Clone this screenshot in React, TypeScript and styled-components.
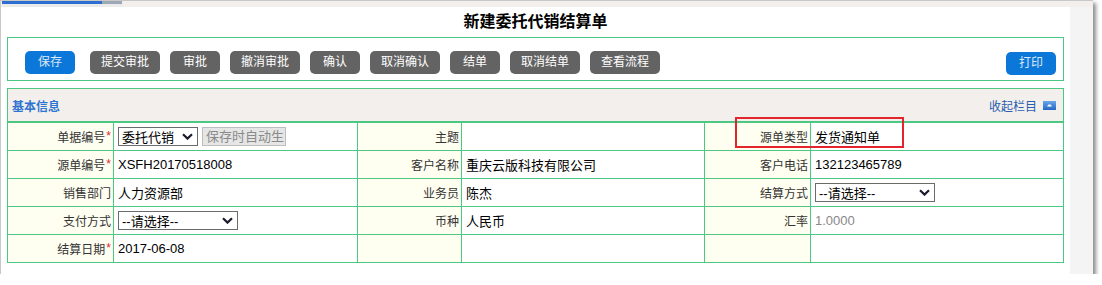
import React from 'react';
import styled, { createGlobalStyle } from 'styled-components';

const GREEN = '#4cc883';

const GlobalStyle = createGlobalStyle`
  html, body {
    margin: 0;
    padding: 0;
    background: #fff;
  }
  body {
    font-family: "Liberation Sans", "Noto Sans CJK SC", sans-serif;
    font-size: 12px;
    color: #333;
  }
`;

type Cell = {
  label?: string;
  req?: boolean;
  value?: React.ReactNode;
  muted?: boolean;
};

const actions = [
  { text: '提交审批', w: 70 },
  { text: '审批', w: 50 },
  { text: '撤消审批', w: 70 },
  { text: '确认', w: 50 },
  { text: '取消确认', w: 70 },
  { text: '结单', w: 50 },
  { text: '取消结单', w: 70 },
  { text: '查看流程', w: 70 },
];

function Chevron() {
  return (
    <svg width="11" height="7" viewBox="0 0 11 7">
      <path d="M1 1.2 L5.5 5.6 L10 1.2" fill="none" stroke="#1b1b2e" strokeWidth="2.2" />
    </svg>
  );
}

function CollapseIcon() {
  return (
    <svg width="13" height="9" viewBox="0 0 13 9">
      <defs>
        <linearGradient id="cg" x1="0" y1="0" x2="0" y2="1">
          <stop offset="0" stopColor="#6aa6ea" />
          <stop offset="1" stopColor="#2566c4" />
        </linearGradient>
      </defs>
      <rect x="0" y="0" width="13" height="9" fill="url(#cg)" />
      <path d="M4 5.5 L5.5 3.5 L7.5 3.5 L9 5.5 Z" fill="#fff" />
    </svg>
  );
}

function buildRows(): Cell[][] {
  return [
    [
      {
        label: '单据编号',
        req: true,
        value: (
          <Inline>
            <SelectBox $w={80}>委托代销<Chevron /></SelectBox>
            <AutoInput>保存时自动生</AutoInput>
          </Inline>
        ),
      },
      { label: '主题' },
      { label: '源单类型', value: '发货通知单' },
    ],
    [
      { label: '源单编号', req: true, value: 'XSFH20170518008' },
      { label: '客户名称', value: '重庆云版科技有限公司' },
      { label: '客户电话', value: '132123465789' },
    ],
    [
      { label: '销售部门', value: '人力资源部' },
      { label: '业务员', value: '陈杰' },
      { label: '结算方式', value: <SelectBox $w={120}>--请选择--<Chevron /></SelectBox> },
    ],
    [
      { label: '支付方式', value: <SelectBox $w={120}>--请选择--<Chevron /></SelectBox> },
      { label: '币种', value: '人民币' },
      { label: '汇率', value: '1.0000', muted: true },
    ],
    [{ label: '结算日期', req: true, value: '2017-06-08' }, {}, {}],
  ];
}

export default function App() {
  const rows = buildRows();
  return (
    <>
      <GlobalStyle />
      <Window>
        <TopStrip>
          <Tab>
            <TabBar />
          </Tab>
        </TopStrip>
        <Body>
          <Main>
            <Title>新建委托代销结算单</Title>
            <Toolbar>
              <ButtonGroup>
                <SaveBtn $primary $w={50}>保存</SaveBtn>
                {actions.map((a) => (
                  <Btn key={a.text} $w={a.w}>{a.text}</Btn>
                ))}
              </ButtonGroup>
              <PrintBtn $primary $w={50}>打印</PrintBtn>
            </Toolbar>

            <Section>
              <SectionHeader>
                <HeaderTitle>基本信息</HeaderTitle>
                <Collapse>
                  收起栏目
                  <CollapseIcon />
                </Collapse>
              </SectionHeader>
              <FormTable>
                <colgroup>
                  <col style={{ width: 106 }} />
                  <col style={{ width: 244 }} />
                  <col style={{ width: 104 }} />
                  <col style={{ width: 243 }} />
                  <col style={{ width: 106 }} />
                  <col />
                </colgroup>
                <tbody>
                  {rows.map((row, i) => (
                    <tr key={i}>
                      {row.map((c, j) => (
                        <React.Fragment key={j}>
                          <Label>
                            {c.label}
                            {c.req && <Req>*</Req>}
                          </Label>
                          <Value $muted={c.muted}>{c.value}</Value>
                        </React.Fragment>
                      ))}
                    </tr>
                  ))}
                </tbody>
              </FormTable>
              {/* annotation box drawn over the 源单类型 row */}
              <Callout />
            </Section>
          </Main>
          <Track />
        </Body>
      </Window>
    </>
  );
}

const Window = styled.div`
  width: 1092px;
  border-top: 1px solid #c8c8c8;
  border-left: 1px solid #c8c8c8;
  box-shadow: 3px 3px 4px rgba(0, 0, 0, 0.45);
  background: #fff;
`;

const TopStrip = styled.div`
  height: 6px;
  background: #f2efec;
  padding-left: 1px;
`;

const Tab = styled.div`
  width: 120px;
  height: 6px;
  background: #ebebeb;
`;

const TabBar = styled.div`
  height: 3px;
  background: linear-gradient(to right, #2d6fd1 0, #2d6fd1 100px, #9ea7b6 100px);
`;

const Body = styled.div`
  display: flex;
`;

const Main = styled.div`
  flex: 1;
  padding: 0 6px 11px 6px;
  background: #fff;
`;

const Track = styled.div`
  width: 23px;
  background: #f4f4f4;
`;

const Title = styled.div`
  height: 30px;
  line-height: 30px;
  text-align: center;
  font-size: 16px;
  font-weight: bold;
  color: #000;
`;

const Toolbar = styled.div`
  height: 44px;
  box-sizing: border-box;
  border: 1px solid ${GREEN};
  padding: 13px 7px 0 17px;
  display: flex;
  justify-content: space-between;
  align-items: flex-start;
`;

const ButtonGroup = styled.div`
  display: flex;
  gap: 10px;
`;

const Btn = styled.button<{ $primary?: boolean; $w: number }>`
  width: ${(p) => p.$w}px;
  height: 23px;
  padding: 0;
  border: none;
  border-radius: 5px;
  background: ${(p) => (p.$primary ? '#0b77d8' : '#636363')};
  color: ${(p) => (p.$primary ? '#dce8f6' : '#fff')};
  font-family: inherit;
  font-size: 12px;
  line-height: 23px;
  cursor: pointer;
`;

const SaveBtn = styled(Btn)`
  margin-right: 5px;
`;

const PrintBtn = styled(Btn)`
  margin-top: 1px;
`;

const Section = styled.div`
  position: relative;
  margin-top: 7px;
`;

const SectionHeader = styled.div`
  height: 32px;
  border: 1px solid ${GREEN};
  border-bottom: none;
  background: #f2efec;
  display: flex;
  align-items: center;
  justify-content: space-between;
  padding: 0 7px 0 4px;
`;

const HeaderTitle = styled.div`
  font-size: 12px;
  font-weight: bold;
  color: #2f74d0;
`;

const Collapse = styled.div`
  display: flex;
  align-items: center;
  gap: 6px;
  font-size: 12px;
  color: #2a5db0;
`;

const FormTable = styled.table`
  width: 100%;
  table-layout: fixed;
  border-collapse: collapse;

  td {
    height: 27px;
    padding: 0;
    border: 1px solid ${GREEN};
  }
  tr:first-child td {
    border-top: 2px solid ${GREEN};
  }
`;

const Label = styled.td`
  background: #fefef1;
  text-align: right;
  padding-right: 2px !important;
  font-size: 12px;
  color: #333;
  white-space: nowrap;
`;

const Req = styled.span`
  color: #e4262d;
  font-size: 12px;
  margin-left: 1px;
  position: relative;
  top: -2px;
`;

const Value = styled.td<{ $muted?: boolean }>`
  background: #fff;
  padding-left: 4px !important;
  font-size: 13px;
  color: ${(p) => (p.$muted ? '#888' : '#000')};
  white-space: nowrap;
`;

const Inline = styled.div`
  display: flex;
  align-items: center;
  gap: 4px;
`;

const SelectBox = styled.div<{ $w: number }>`
  width: ${(p) => p.$w}px;
  height: 19px;
  box-sizing: border-box;
  border: 1px solid #6b6b6b;
  padding: 0 4px 0 3px;
  display: flex;
  align-items: center;
  justify-content: space-between;
  font-size: 13px;
  color: #000;
  background: #fff;
`;

const AutoInput = styled.div`
  width: 84px;
  height: 19px;
  box-sizing: border-box;
  border: 1px solid #bdbdbd;
  background: #e6e6e6;
  color: #8a8a8a;
  font-size: 13px;
  line-height: 17px;
  padding-left: 3px;
  overflow: hidden;
  white-space: nowrap;
`;

const Callout = styled.div`
  position: absolute;
  left: 728px;
  top: 29px;
  width: 169px;
  height: 31px;
  box-sizing: border-box;
  border: 2px solid #e3262e;
  pointer-events: none;
`;
